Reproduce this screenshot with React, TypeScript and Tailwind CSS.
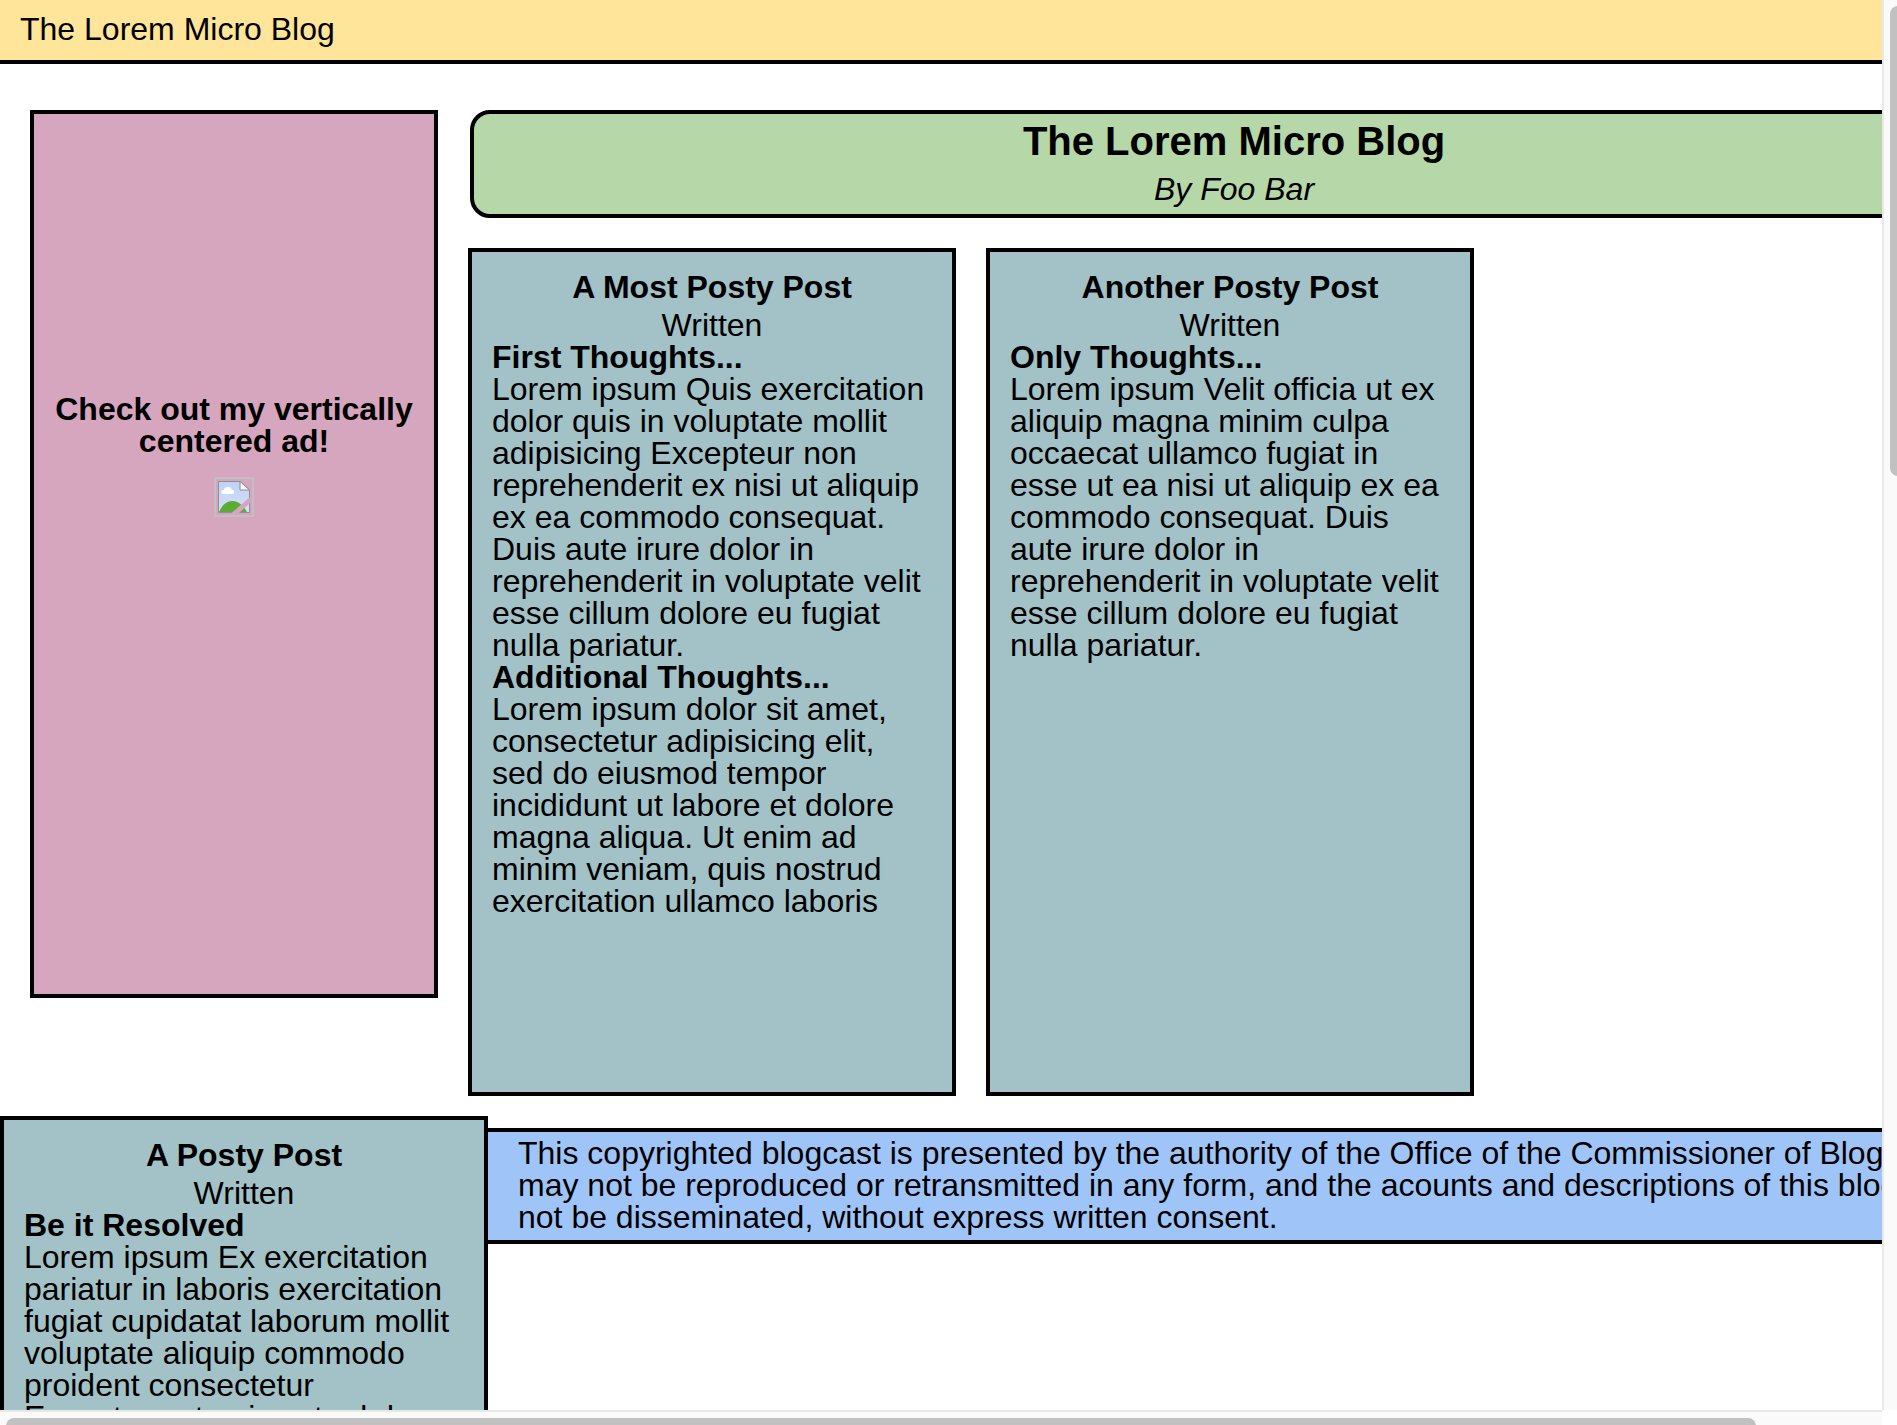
type Section = { heading: string; text: string };
type PostData = { title: string; sections: Section[] };

const POSTS: PostData[] = [
  {
    title: "A Most Posty Post",
    sections: [
      {
        heading: "First Thoughts...",
        text: "Lorem ipsum Quis exercitation dolor quis in voluptate mollit adipisicing Excepteur non reprehenderit ex nisi ut aliquip ex ea commodo consequat. Duis aute irure dolor in reprehenderit in voluptate velit esse cillum dolore eu fugiat nulla pariatur.",
      },
      {
        heading: "Additional Thoughts...",
        text: "Lorem ipsum dolor sit amet, consectetur adipisicing elit, sed do eiusmod tempor incididunt ut labore et dolore magna aliqua. Ut enim ad minim veniam, quis nostrud exercitation ullamco laboris",
      },
    ],
  },
  {
    title: "Another Posty Post",
    sections: [
      {
        heading: "Only Thoughts...",
        text: "Lorem ipsum Velit officia ut ex aliquip magna minim culpa occaecat ullamco fugiat in esse ut ea nisi ut aliquip ex ea commodo consequat. Duis aute irure dolor in reprehenderit in voluptate velit esse cillum dolore eu fugiat nulla pariatur.",
      },
    ],
  },
];

const LAST_POST: PostData = {
  title: "A Posty Post",
  sections: [
    {
      heading: "Be it Resolved",
      text: "Lorem ipsum Ex exercitation pariatur in laboris exercitation fugiat cupidatat laborum mollit voluptate aliquip commodo proident consectetur Excepteur et quis est ad do.",
    },
  ],
};

function Post({ title, sections }: PostData) {
  return (
    <article className="h-[848px] w-[488px] shrink-0 border-4 border-black bg-[#a2c2c7] px-5 pt-[19px] pb-5">
      <h2 className="mb-1.5 text-center font-bold">{title}</h2>
      <p className="text-center">Written</p>
      {sections.map((s) => (
        <section key={s.heading}>
          <h3 className="font-bold">{s.heading}</h3>
          <p>{s.text}</p>
        </section>
      ))}
    </article>
  );
}

function MissingImage() {
  return (
    <span role="img" aria-label="Advertisement" className="flex size-10 items-center justify-center border-2 border-[#c0c0c0]">
      <svg viewBox="0 0 32 32" className="size-8">
        <defs>
          <linearGradient id="sky" x1="0" y1="0" x2="0" y2="1">
            <stop offset="0" stopColor="#bfd2f3" />
            <stop offset="1" stopColor="#d3e1fa" />
          </linearGradient>
        </defs>
        <path d="M0.5 0.5H22.5L31.5 9V31.5H0.5Z" fill="url(#sky)" stroke="#8e8e96" />
        <path d="M5.500 13C2.500 13 2.500 9 6 9C6.500 5 13 4.500 13.500 8.500C17 8.500 17 13 14 13Z" fill="#fff" />
        <path d="M1 31C7 16.500 21 16 29 31Z" fill="#5aac35" />
        <path d="M22 0.500V9H31.500Z" fill="#f6f6f6" stroke="#8e8e96" />
        <path d="M32 16V22L21 32H13.500Z" fill="#d5a6bd" />
      </svg>
    </span>
  );
}

export default function App() {
  return (
    <div className="grid h-screen grid-cols-[minmax(0,1fr)_15px] grid-rows-[minmax(0,1fr)_15px] overflow-hidden bg-white font-['Liberation_Sans',Arial,sans-serif] text-[32px] leading-8 text-black">
      <div className="overflow-hidden">
        <div className="min-w-[2028px]">
          <header className="h-16 border-b-4 border-black bg-[#ffe599] px-5 py-[13px]">The Lorem Micro Blog</header>
          <div className="mt-[46px] flex h-[1006px] items-start gap-[30px] px-[30px]">
            <aside className="flex h-[888px] w-[408px] shrink-0 flex-col items-center justify-center gap-5 border-4 border-black bg-[#d5a6bd] px-5 pt-5 pb-[218px]">
              <h2 className="text-center font-bold">Check out my vertically centered ad!</h2>
              <MissingImage />
            </aside>
            <main className="flex grow flex-col gap-[30px]">
              <div className="ml-0.5 rounded-[20px] border-4 border-black bg-[#b6d7a8] pt-[7px] pb-[9px] text-center">
                <h1 className="text-[40px] leading-10 font-bold">The Lorem Micro Blog</h1>
                <p className="mt-3 italic">By Foo Bar</p>
              </div>
              <div className="flex gap-[30px]">
                {POSTS.map((p) => (
                  <Post key={p.title} {...p} />
                ))}
              </div>
            </main>
          </div>
          <div className="flex items-start">
            <Post {...LAST_POST} />
            <footer className="mt-3 grow border-y-4 border-black bg-[#9fc5f8] pt-[5px] pb-[7px] pl-[30px]">
              <p>
                This copyrighted blogcast is presented by the authority of the Office of the Commissioner of Blogging. It
                may not be reproduced or retransmitted in any form, and the acounts and descriptions of this blogcast may
                not be disseminated, without express written consent.
              </p>
            </footer>
          </div>
        </div>
      </div>
      <div className="overflow-hidden border-l-2 border-[#e8e8e8] bg-[#fafafa] pt-1.5 pl-1.5">
        <div className="h-[33.5%] w-4 rounded-lg bg-[#c1c1c1]" />
      </div>
      <div className="overflow-hidden border-t-2 border-[#e8e8e8] bg-[#fafafa] pt-1.5 pl-1.5">
        <div className="h-4 w-[93.3%] rounded-lg bg-[#c1c1c1]" />
      </div>
    </div>
  );
}
